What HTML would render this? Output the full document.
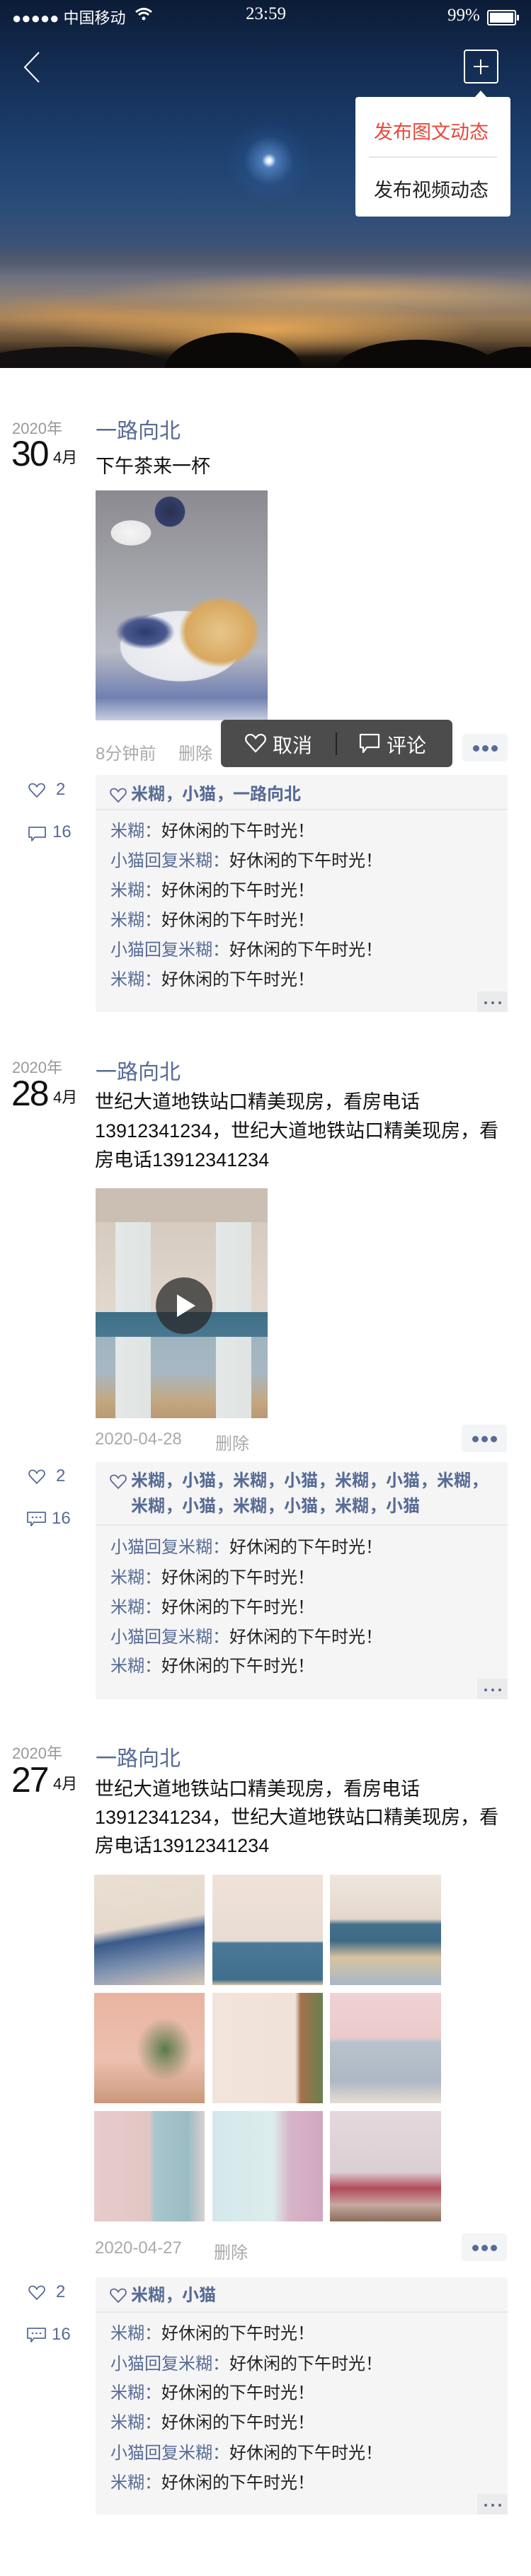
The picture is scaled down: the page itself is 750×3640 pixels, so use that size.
<!DOCTYPE html>
<html><head><meta charset="utf-8">
<style>
*{margin:0;padding:0;box-sizing:border-box}
body{width:750px;height:3640px;background:#fff;position:relative;overflow:hidden;font-family:"Liberation Sans","Noto Sans CJK SC",sans-serif;color:#222}
.a{position:absolute;white-space:nowrap}
.hero{position:absolute;left:0;top:0;width:750px;height:520px;overflow:hidden;
background:
radial-gradient(circle at 380px 227px,#fff 0,#e8f4ff 3px,rgba(120,180,255,.5) 10px,rgba(60,120,200,.12) 35px,rgba(0,0,0,0) 60px),
radial-gradient(ellipse 300px 40px at 380px 465px,rgba(250,180,90,.8),rgba(0,0,0,0)),
radial-gradient(ellipse 380px 30px at 500px 415px,rgba(240,180,100,.6),rgba(0,0,0,0)),
radial-gradient(ellipse 200px 30px at 120px 445px,rgba(230,160,80,.5),rgba(0,0,0,0)),
linear-gradient(180deg,#0c1c36 0,#15315a 120px,#1f4373 230px,#2d4d78 300px,#3c5276 345px,#525a6e 370px,#6e7080 390px,#8a8078 420px,#9a7c58 450px,#6a5236 480px,#1c1610 505px,#0a0908 520px)}
.mtn{position:absolute;background:#0a0908}
.y{font-size:22px;color:#999}
.d{font-size:50px;color:#111;letter-spacing:-2px}
.m{font-size:22px;color:#111}
.nm{font-size:30px;color:#576b95}
.tx{font-size:27px;color:#111;line-height:41px;white-space:normal;width:590px}
.meta{font-size:24px;color:#aaa}
.more{position:absolute;width:64px;height:39px;background:#f3f4f6;border-radius:5px}
.more i{position:absolute;top:16px;width:9px;height:9px;border-radius:50%;background:#576b95}
.box{position:absolute;left:135px;width:582px;background:#f5f5f5;border-radius:3px}
.lk{position:absolute;left:50px;font-size:24px;font-weight:bold;color:#576b95;line-height:36px;white-space:normal;width:520px}
.hr{position:absolute;left:0;width:582px;height:2px;background:#e8e8e8}
.cm{position:absolute;left:21px;font-size:24px;color:#222;line-height:30px;white-space:nowrap}
.cm b{font-weight:normal;color:#576b95}
.sm{position:absolute;right:0;bottom:0;width:43px;height:29px;background:#ebebeb}
.sm i{position:absolute;top:14px;width:4px;height:4px;border-radius:50%;background:#576b95}
.cnt{font-size:24px;color:#576b95}
</style></head><body>

<div class="hero">
<div class="mtn" style="left:-60px;top:490px;width:320px;height:80px;border-radius:50% 50% 0 0;background:#121010"></div>
<div class="mtn" style="left:230px;top:470px;width:200px;height:120px;border-radius:50% 50% 0 0"></div>
<div class="mtn" style="left:470px;top:480px;width:240px;height:100px;border-radius:50% 50% 0 0"></div>
<div class="mtn" style="left:660px;top:490px;width:160px;height:100px;border-radius:50% 50% 0 0"></div>
</div>

<!-- status bar -->
<div class="a" style="left:17px;top:8px;font-size:22px;color:#fff">●●●●● 中国移动</div>
<svg class="a" style="left:190px;top:10px" width="26" height="20" viewBox="0 0 26 20"><path d="M2 7 Q13 -2 24 7" fill="none" stroke="#fff" stroke-width="3"/><path d="M6 11 Q13 5 20 11" fill="none" stroke="#fff" stroke-width="3"/><circle cx="13" cy="16" r="2.5" fill="#fff"/></svg>
<div class="a" style="left:347px;top:6px;font-size:25px;color:#fff;font-family:'Liberation Serif',serif">23:59</div>
<div class="a" style="left:632px;top:8px;font-size:25px;color:#fff;font-family:'Liberation Serif',serif">99%</div>
<div class="a" style="left:688px;top:14px;width:41px;height:22px;border:2px solid #fff;border-radius:3px;padding:2px"><div style="width:100%;height:100%;background:#fff"></div></div>
<div class="a" style="left:730px;top:21px;width:3px;height:8px;background:#fff"></div>

<!-- nav -->
<svg class="a" style="left:30px;top:72px" width="30" height="46" viewBox="0 0 30 46"><path d="M25 2 L5 23 L25 44" fill="none" stroke="#fff" stroke-width="2"/></svg>
<div class="a" style="left:655px;top:70px;width:49px;height:48px;border:2px solid #fff;border-radius:4px"></div>
<div class="a" style="left:669px;top:93px;width:21px;height:2px;background:#fff"></div>
<div class="a" style="left:678px;top:84px;width:2px;height:21px;background:#fff"></div>

<!-- popup -->
<div class="a" style="left:670px;top:128px;width:0;height:0;border-left:9px solid transparent;border-right:9px solid transparent;border-bottom:10px solid #fff"></div>
<div class="a" style="left:502px;top:137px;width:219px;height:169px;background:#fff;border-radius:4px"></div>
<div class="a" style="left:528px;top:165px;font-size:27px;color:#e8483a">发布图文动态</div>
<div class="a" style="left:521px;top:221px;width:181px;height:2px;background:#e6e6e6"></div>
<div class="a" style="left:528px;top:247px;font-size:27px;color:#222">发布视频动态</div>

<!-- POST 1 -->
<div class="a y" style="left:17px;top:588px">2020年</div>
<div class="a d" style="left:16px;top:612px">30</div>
<div class="a m" style="left:75px;top:629px">4月</div>
<div class="a nm" style="left:135px;top:584px">一路向北</div>
<div class="a" style="left:135px;top:637px;font-size:27px;color:#111">下午茶来一杯</div>
<div class="a" style="left:135px;top:693px;width:243px;height:325px;background:
radial-gradient(ellipse 60px 35px at 70px 200px,#2c3b6e 0,#4a5a90 50%,rgba(0,0,0,0) 70%),
radial-gradient(ellipse 80px 70px at 175px 200px,#e6c68a 0,#d8a860 60%,rgba(0,0,0,0) 72%),
radial-gradient(ellipse 120px 70px at 120px 220px,#f2f2f4 0,#e6e8ee 70%,rgba(0,0,0,0) 72%),
radial-gradient(ellipse 40px 25px at 50px 60px,#f4f4f4 0,#e8e8e8 70%,rgba(0,0,0,0) 72%),
radial-gradient(ellipse 30px 30px at 105px 30px,#2a3050 0,#34406a 70%,rgba(0,0,0,0) 72%),
linear-gradient(180deg,#8a8a90 0,#a5a6ac 40%,#b8bac4 70%,#7080b0 90%,#c8cee0 100%)"></div>
<div class="a meta" style="left:135px;top:1045px">8分钟前</div>
<div class="a meta" style="left:252px;top:1045px">删除</div>
<div class="a" style="left:312px;top:1017px;width:327px;height:67px;background:#4c4c4c;border-radius:7px"></div>
<svg class="a" style="left:346px;top:1036px" width="30" height="28" viewBox="0 0 30 28"><path d="M15 26 L3 13 C-1 8 2 2 8 2 C11 2 13 4 15 7 C17 4 19 2 22 2 C28 2 31 8 27 13 Z" fill="none" stroke="#fff" stroke-width="2.2"/></svg>
<div class="a" style="left:385px;top:1032px;font-size:28px;color:#fff">取消</div>
<div class="a" style="left:474px;top:1035px;width:2px;height:32px;background:#222"></div>
<svg class="a" style="left:507px;top:1036px" width="30" height="30" viewBox="0 0 30 30"><path d="M2 2 H28 V20 H11 L6 27 V20 H2 Z" fill="none" stroke="#fff" stroke-width="2.2" stroke-linejoin="round"/></svg>
<div class="a" style="left:546px;top:1032px;font-size:28px;color:#fff">评论</div>
<div class="more" style="left:653px;top:1037px"><i style="left:15px"></i><i style="left:28px"></i><i style="left:41px"></i></div>

<svg class="a" style="left:40px;top:1106px" width="24" height="22" viewBox="0 0 24 22"><path d="M12 20 L2.5 10 C-0.5 6 1.5 1.5 6 1.5 C8.5 1.5 10.5 3 12 5.5 C13.5 3 15.5 1.5 18 1.5 C22.5 1.5 24.5 6 21.5 10 Z" fill="none" stroke="#576b95" stroke-width="1.8"/></svg>
<div class="a cnt" style="left:79px;top:1102px">2</div>
<svg class="a" style="left:40px;top:1168px" width="25" height="22" viewBox="0 0 25 22"><path d="M1 1 H24 V15 H9 L5 20 V15 H1 Z" fill="none" stroke="#576b95" stroke-width="1.8" stroke-linejoin="round"/></svg>
<div class="a cnt" style="left:74px;top:1162px">16</div>

<div class="box" style="top:1095px;height:335px">
<svg class="a" style="left:20px;top:18px" width="24" height="22" viewBox="0 0 24 22"><path d="M12 20 L2.5 10 C-0.5 6 1.5 1.5 6 1.5 C8.5 1.5 10.5 3 12 5.5 C13.5 3 15.5 1.5 18 1.5 C22.5 1.5 24.5 6 21.5 10 Z" fill="none" stroke="#576b95" stroke-width="1.8"/></svg>
<div class="lk" style="top:10px">米糊，小猫，一路向北</div>
<div class="hr" style="top:48px"></div>
<div class="cm" style="top:65px"><b>米糊：</b>好休闲的下午时光！</div>
<div class="cm" style="top:107px"><b>小猫回复米糊：</b>好休闲的下午时光！</div>
<div class="cm" style="top:149px"><b>米糊：</b>好休闲的下午时光！</div>
<div class="cm" style="top:191px"><b>米糊：</b>好休闲的下午时光！</div>
<div class="cm" style="top:233px"><b>小猫回复米糊：</b>好休闲的下午时光！</div>
<div class="cm" style="top:275px"><b>米糊：</b>好休闲的下午时光！</div>
<div class="sm"><i style="left:10px"></i><i style="left:20px"></i><i style="left:30px"></i></div>
</div>

<!-- POST 2 -->
<div class="a y" style="left:17px;top:1491px">2020年</div>
<div class="a d" style="left:16px;top:1516px">28</div>
<div class="a m" style="left:75px;top:1533px">4月</div>
<div class="a nm" style="left:135px;top:1490px">一路向北</div>
<div class="a tx" style="left:134px;top:1537px">世纪大道地铁站口精美现房，看房电话13912341234，世纪大道地铁站口精美现房，看房电话13912341234</div>
<div class="a" style="left:135px;top:1679px;width:243px;height:325px;background:
linear-gradient(180deg,rgba(0,0,0,0) 0,rgba(0,0,0,0) 175px,#3f6f88 175px,#4a7890 210px,rgba(0,0,0,0) 210px),
linear-gradient(90deg,rgba(0,0,0,0) 28px,#e4e8e6 28px,#dfe4e2 78px,rgba(0,0,0,0) 78px,rgba(0,0,0,0) 170px,#e4e8e6 170px,#dfe4e2 220px,rgba(0,0,0,0) 220px),
linear-gradient(180deg,#cbbfb3 0,#d6cbc0 50px,#e2d8cf 180px,#9fb4c0 210px,#a7b8c4 260px,#c4a882 300px,#b89a74 325px)"></div>
<div class="a" style="left:135px;top:1679px;width:243px;height:325px;background:linear-gradient(180deg,#cbbfb3 0,#cbbfb3 48px,rgba(0,0,0,0) 48px)"></div>
<div class="a" style="left:220px;top:1805px;width:80px;height:80px;border-radius:50%;background:rgba(40,40,40,.75)"></div>
<div class="a" style="left:250px;top:1829px;width:0;height:0;border-top:16px solid transparent;border-bottom:16px solid transparent;border-left:26px solid #fff"></div>
<div class="a meta" style="left:134px;top:2020px">2020-04-28</div>
<div class="a meta" style="left:304px;top:2020px">删除</div>
<div class="more" style="left:652px;top:2013px"><i style="left:15px"></i><i style="left:28px"></i><i style="left:41px"></i></div>

<svg class="a" style="left:40px;top:2076px" width="24" height="22" viewBox="0 0 24 22"><path d="M12 20 L2.5 10 C-0.5 6 1.5 1.5 6 1.5 C8.5 1.5 10.5 3 12 5.5 C13.5 3 15.5 1.5 18 1.5 C22.5 1.5 24.5 6 21.5 10 Z" fill="none" stroke="#576b95" stroke-width="1.8"/></svg>
<div class="a cnt" style="left:79px;top:2072px">2</div>
<svg class="a" style="left:38px;top:2136px" width="27" height="22" viewBox="0 0 27 22"><path d="M1 1 H26 V15 H10 L6 20 V15 H1 Z" fill="none" stroke="#576b95" stroke-width="1.8" stroke-linejoin="round"/><circle cx="8" cy="8" r="1.3" fill="#576b95"/><circle cx="13.5" cy="8" r="1.3" fill="#576b95"/><circle cx="19" cy="8" r="1.3" fill="#576b95"/></svg>
<div class="a cnt" style="left:73px;top:2132px">16</div>

<div class="box" style="top:2066px;height:335px">
<svg class="a" style="left:20px;top:17px" width="24" height="22" viewBox="0 0 24 22"><path d="M12 20 L2.5 10 C-0.5 6 1.5 1.5 6 1.5 C8.5 1.5 10.5 3 12 5.5 C13.5 3 15.5 1.5 18 1.5 C22.5 1.5 24.5 6 21.5 10 Z" fill="none" stroke="#576b95" stroke-width="1.8"/></svg>
<div class="lk" style="top:9px">米糊，小猫，米糊，小猫，米糊，小猫，米糊，米糊，小猫，米糊，小猫，米糊，小猫</div>
<div class="hr" style="top:88px"></div>
<div class="cm" style="top:106px"><b>小猫回复米糊：</b>好休闲的下午时光！</div>
<div class="cm" style="top:149px"><b>米糊：</b>好休闲的下午时光！</div>
<div class="cm" style="top:191px"><b>米糊：</b>好休闲的下午时光！</div>
<div class="cm" style="top:233px"><b>小猫回复米糊：</b>好休闲的下午时光！</div>
<div class="cm" style="top:274px"><b>米糊：</b>好休闲的下午时光！</div>
<div class="sm"><i style="left:10px"></i><i style="left:20px"></i><i style="left:30px"></i></div>
</div>

<!-- POST 3 -->
<div class="a y" style="left:17px;top:2460px">2020年</div>
<div class="a d" style="left:16px;top:2486px">27</div>
<div class="a m" style="left:75px;top:2503px">4月</div>
<div class="a nm" style="left:135px;top:2460px">一路向北</div>
<div class="a tx" style="left:134px;top:2508px;line-height:40px">世纪大道地铁站口精美现房，看房电话13912341234，世纪大道地铁站口精美现房，看房电话13912341234</div>

<div class="a" style="left:133px;top:2649px;width:156px;height:156px;background:linear-gradient(170deg,#eadfd4 0,#e6d9cc 45%,#3a5a8a 55%,#7a90b0 75%,#d8c8b8 100%)"></div>
<div class="a" style="left:300px;top:2649px;width:156px;height:156px;background:linear-gradient(180deg,#f0e2d8 0,#e8dcd2 60%,#4a7a98 62%,#3f6f8c 95%,#d6c2a8 100%)"></div>
<div class="a" style="left:466px;top:2649px;width:157px;height:156px;background:linear-gradient(180deg,#efe6de 0,#e4d8cc 40%,#44708c 45%,#3e6a86 60%,#d8c2a0 75%,#a6b8c8 100%)"></div>
<div class="a" style="left:133px;top:2816px;width:156px;height:156px;background:radial-gradient(ellipse 40px 45px at 100px 80px,#5a7a4a,rgba(0,0,0,0)),linear-gradient(180deg,#e8b4a0 0,#ecc0b0 60%,#d8a890 85%,#c89878 100%)"></div>
<div class="a" style="left:300px;top:2816px;width:156px;height:156px;background:linear-gradient(90deg,#f2e4da 0,#f0e2d8 75%,#a4704c 80%,#6a8050 100%)"></div>
<div class="a" style="left:466px;top:2816px;width:157px;height:156px;background:linear-gradient(180deg,#f0d2d4 0,#eccacc 40%,#b8c2cc 45%,#aeb8c4 80%,#e8dcd0 100%)"></div>
<div class="a" style="left:133px;top:2983px;width:156px;height:156px;background:linear-gradient(90deg,#e8cccc 0,#e2c6c4 50%,#a8c6cc 55%,#9cbcc4 85%,#d8d2d0 100%)"></div>
<div class="a" style="left:300px;top:2983px;width:156px;height:156px;background:linear-gradient(90deg,#d4e8ec 0,#dcecec 55%,#d8b4c8 70%,#d0a8c0 100%)"></div>
<div class="a" style="left:466px;top:2983px;width:157px;height:156px;background:linear-gradient(180deg,#e4d8dc 0,#dccfd4 55%,#b04a5a 70%,#c8a8a0 85%,#8a6e5c 100%)"></div>

<div class="a meta" style="left:134px;top:3163px">2020-04-27</div>
<div class="a meta" style="left:302px;top:3163px">删除</div>
<div class="more" style="left:652px;top:3156px"><i style="left:15px"></i><i style="left:28px"></i><i style="left:41px"></i></div>

<svg class="a" style="left:40px;top:3229px" width="24" height="22" viewBox="0 0 24 22"><path d="M12 20 L2.5 10 C-0.5 6 1.5 1.5 6 1.5 C8.5 1.5 10.5 3 12 5.5 C13.5 3 15.5 1.5 18 1.5 C22.5 1.5 24.5 6 21.5 10 Z" fill="none" stroke="#576b95" stroke-width="1.8"/></svg>
<div class="a cnt" style="left:79px;top:3225px">2</div>
<svg class="a" style="left:38px;top:3289px" width="27" height="22" viewBox="0 0 27 22"><path d="M1 1 H26 V15 H10 L6 20 V15 H1 Z" fill="none" stroke="#576b95" stroke-width="1.8" stroke-linejoin="round"/><circle cx="8" cy="8" r="1.3" fill="#576b95"/><circle cx="13.5" cy="8" r="1.3" fill="#576b95"/><circle cx="19" cy="8" r="1.3" fill="#576b95"/></svg>
<div class="a cnt" style="left:73px;top:3285px">16</div>

<div class="box" style="top:3218px;height:335px">
<svg class="a" style="left:20px;top:15px" width="24" height="22" viewBox="0 0 24 22"><path d="M12 20 L2.5 10 C-0.5 6 1.5 1.5 6 1.5 C8.5 1.5 10.5 3 12 5.5 C13.5 3 15.5 1.5 18 1.5 C22.5 1.5 24.5 6 21.5 10 Z" fill="none" stroke="#576b95" stroke-width="1.8"/></svg>
<div class="lk" style="top:8px">米糊，小猫</div>
<div class="hr" style="top:48px"></div>
<div class="cm" style="top:65px"><b>米糊：</b>好休闲的下午时光！</div>
<div class="cm" style="top:108px"><b>小猫回复米糊：</b>好休闲的下午时光！</div>
<div class="cm" style="top:149px"><b>米糊：</b>好休闲的下午时光！</div>
<div class="cm" style="top:191px"><b>米糊：</b>好休闲的下午时光！</div>
<div class="cm" style="top:234px"><b>小猫回复米糊：</b>好休闲的下午时光！</div>
<div class="cm" style="top:276px"><b>米糊：</b>好休闲的下午时光！</div>
<div class="sm"><i style="left:10px"></i><i style="left:20px"></i><i style="left:30px"></i></div>
</div>

</body></html>
